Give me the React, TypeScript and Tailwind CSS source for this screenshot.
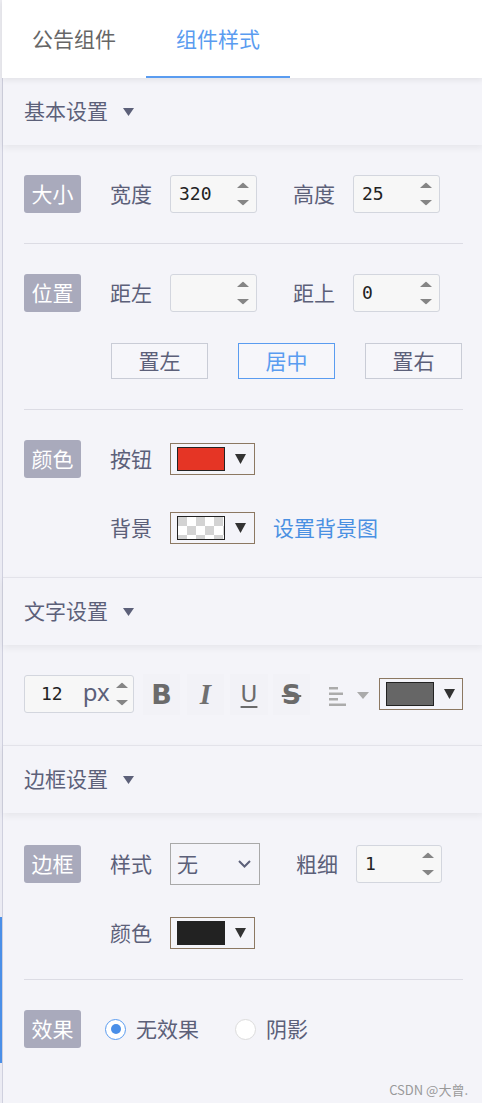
import React from "react";

const labelCls = "text-[21px] leading-none text-[#5c6079] -translate-y-px";

function Spinner() {
  return (
    <svg width="12" height="23" viewBox="0 0 12 23" className="absolute right-[7px] top-1/2 -translate-y-1/2">
      <polygon points="6,0 12,5.5 0,5.5" fill="#858585" />
      <polygon points="0,17.5 12,17.5 6,23" fill="#858585" />
    </svg>
  );
}

function Badge({ text }: { text: string }) {
  return (
    <div className="flex h-[38px] w-[57px] shrink-0 items-center justify-center rounded-[3px] bg-[#a9aabc] pb-[2px] text-[21px] leading-none text-white">
      {text}
    </div>
  );
}

function Caret({ color = "#333" }: { color?: string }) {
  return (
    <svg width="11" height="10" viewBox="0 0 11 10">
      <polygon points="0,0 11,0 5.5,10" fill={color} />
    </svg>
  );
}

function SectionHeader({ title, border }: { title: string; border?: boolean }) {
  return (
    <div
      className={
        border
          ? "relative z-10 flex h-[68px] items-center border-t border-[#e3e3ea] bg-[#f4f4f9] pl-[21px] shadow-[0_3px_7px_rgba(0,0,0,0.06)]"
          : "relative z-10 flex h-[67px] items-center bg-[#f4f4f9] pl-[21px] shadow-[0_3px_7px_rgba(0,0,0,0.06)]"
      }
    >
      <span className={labelCls}>{title}</span>
      <svg width="11" height="8" viewBox="0 0 11 8" className="ml-[15px]">
        <polygon points="0,0 11,0 5.5,8" fill="#5c6079" />
      </svg>
    </div>
  );
}

function Checker() {
  return (
    <svg width="48" height="24" className="block border border-[#222] bg-white">
      <defs>
        <pattern id="chk" width="18" height="18" patternUnits="userSpaceOnUse">
          <rect width="18" height="18" fill="#ffffff" />
          <rect x="0" y="0" width="9" height="9" fill="#d3d3d3" />
          <rect x="9" y="9" width="9" height="9" fill="#d3d3d3" />
        </pattern>
      </defs>
      <rect width="48" height="24" fill="url(#chk)" />
    </svg>
  );
}

function ColorPicker({ swatch }: { swatch: "red" | "check" | "black" }) {
  return (
    <div className="flex h-[32px] w-[85px] items-center border border-[#8c7862] pl-[6px]">
      {swatch === "red" && <div className="h-[24px] w-[48px] border border-[#222] bg-[#e53525]" />}
      {swatch === "black" && <div className="h-[24px] w-[48px] border border-[#222] bg-[#222222]" />}
      {swatch === "check" && <Checker />}
      <div className="ml-[10px] flex">
        <Caret />
      </div>
    </div>
  );
}

function NumBox({ value, wide }: { value: string; wide?: boolean }) {
  return (
    <div
      className={
        wide
          ? "relative flex h-[38px] w-[87px] items-center rounded-[3px] border border-[#d3d6de] bg-[#f7f7f7] pl-[8px]"
          : "relative flex h-[38px] w-[86px] items-center rounded-[3px] border border-[#d3d6de] bg-[#f7f7f7] pl-[8px]"
      }
    >
      <span className="font-['DejaVu_Sans_Mono',monospace] text-[18px] leading-none text-[#222]">{value}</span>
      <Spinner />
    </div>
  );
}

function Divider() {
  return <div className="h-px bg-[#dcdce4]" />;
}

export default function App() {
  return (
    <div className="relative flex h-[1103px] w-[482px] overflow-hidden bg-[#f4f4f9] font-['Noto_Sans_CJK_SC',sans-serif]">
      {/* left strip */}
      <div className="flex w-[2px] shrink-0 flex-col">
        <div className="h-[78px] bg-[#ececf1]" />
        <div className="h-[839px] bg-[#ebebf3]" />
        <div className="h-[146px] bg-[#4a8fe8]" />
        <div className="flex-1 bg-[#ebebf3]" />
      </div>

      <div className="flex flex-1 flex-col">
        {/* tabs */}
        <div className="relative z-20 flex h-[78px] bg-white shadow-[0_2px_6px_rgba(0,0,0,0.08)]">
          <div className="flex w-[144px] items-center justify-center pb-[1px] text-[21px] leading-none text-[#666]">
            公告组件
          </div>
          <div className="relative flex w-[144px] items-center justify-center pb-[1px] text-[21px] leading-none text-[#5a9cf0]">
            组件样式
            <div className="absolute bottom-0 left-0 h-[2px] w-full bg-[#5a9cf0]" />
          </div>
        </div>

        <div className="flex flex-1 flex-col border-l border-[#cfd0de]">
          <SectionHeader title="基本设置" />

          {/* basic body */}
          <div className="pl-[21px] pr-[20px] pt-[30px] pb-[33px]">
            <div className="flex h-[38px] items-center">
              <Badge text="大小" />
              <span className={"ml-[29px] w-[60px] " + labelCls}>宽度</span>
              <NumBox value="320" wide />
              <span className={"ml-[36px] w-[60px] " + labelCls}>高度</span>
              <NumBox value="25" wide />
            </div>
            <div className="mt-[30px]">
              <Divider />
            </div>
            <div className="mt-[30px] flex h-[38px] items-center">
              <Badge text="位置" />
              <span className={"ml-[29px] w-[60px] " + labelCls}>距左</span>
              <NumBox value="" wide />
              <span className={"ml-[36px] w-[60px] " + labelCls}>距上</span>
              <NumBox value="0" wide />
            </div>
            <div className="mt-[31px] flex gap-[30px] pl-[87px]">
              <div className="flex h-[36px] w-[97px] items-center justify-center border border-[#c9ccd6] bg-[#f6f6fa] pb-[2px] text-[21px] leading-none text-[#5c6079]">
                置左
              </div>
              <div className="flex h-[36px] w-[97px] items-center justify-center border border-[#5a9cf0] bg-[#f6f6fa] pb-[2px] text-[21px] leading-none text-[#5a9cf0]">
                居中
              </div>
              <div className="flex h-[36px] w-[97px] items-center justify-center border border-[#c9ccd6] bg-[#f6f6fa] pb-[2px] text-[21px] leading-none text-[#5c6079]">
                置右
              </div>
            </div>
            <div className="mt-[30px]">
              <Divider />
            </div>
            <div className="mt-[30px] flex h-[38px] items-center">
              <Badge text="颜色" />
              <span className={"ml-[29px] w-[60px] " + labelCls}>按钮</span>
              <ColorPicker swatch="red" />
            </div>
            <div className="mt-[34px] flex h-[32px] items-center pl-[86px]">
              <span className={"w-[60px] " + labelCls}>背景</span>
              <ColorPicker swatch="check" />
              <span className="ml-[18px] -translate-y-px text-[21px] leading-none text-[#4a90e2]">设置背景图</span>
            </div>
          </div>

          <SectionHeader title="文字设置" border />

          {/* text body */}
          <div className="pl-[21px] pr-[20px] pt-[30px] pb-[32px]">
            <div className="flex h-[38px] items-center">
              <div className="relative flex h-[38px] w-[110px] items-center rounded-[3px] border border-[#d3d6de] bg-[#f7f7f7]">
                <span className="ml-[16px] font-['DejaVu_Sans_Mono',monospace] text-[18px] leading-none text-[#222]">12</span>
                <span className="ml-[20px] -translate-y-[2px] font-['Noto_Sans',sans-serif] text-[24px] leading-none text-[#5c6079]">px</span>
                <svg width="12" height="23" viewBox="0 0 12 23" className="absolute right-[5px] top-1/2 -translate-y-1/2">
                  <polygon points="6,0 12,5.5 0,5.5" fill="#858585" />
                  <polygon points="0,17.5 12,17.5 6,23" fill="#858585" />
                </svg>
              </div>
              <div className="ml-[9px] flex h-[41px] w-[37px] items-center justify-center bg-[#f2f2f7] font-['DejaVu_Sans',sans-serif] text-[27px] font-bold leading-none text-[#6b6b6b]">
                B
              </div>
              <div className="ml-[7px] flex h-[41px] w-[37px] items-center justify-center bg-[#f2f2f7] font-['Liberation_Serif',serif] text-[29px] font-bold italic leading-none text-[#707070]">
                I
              </div>
              <div className="ml-[6px] flex h-[41px] w-[38px] items-center justify-center bg-[#f2f2f7] font-['DejaVu_Sans',sans-serif] text-[23px] leading-none text-[#6b6b6b] underline decoration-2 underline-offset-[4px]">
                U
              </div>
              <div className="ml-[5px] flex h-[41px] w-[37px] items-center justify-center bg-[#f2f2f7] font-['DejaVu_Sans',sans-serif] text-[27px] font-bold leading-none text-[#6b6b6b] line-through decoration-2">
                S
              </div>
              <svg width="18" height="20" viewBox="0 0 18 20" className="ml-[19px] mt-[6px]">
                <rect x="0" y="0" width="9" height="2.5" fill="#ababab" />
                <rect x="0" y="5.5" width="14" height="2.5" fill="#ababab" />
                <rect x="0" y="11" width="9" height="2.5" fill="#ababab" />
                <rect x="0" y="16.5" width="17" height="2.5" fill="#ababab" />
              </svg>
              <svg width="12" height="7" viewBox="0 0 12 7" className="ml-[10px] mt-[2px]">
                <polygon points="0,0 12,0 6,7" fill="#ababab" />
              </svg>
              <div className="ml-[10px] flex h-[32px] w-[84px] items-center border border-[#8c7862] pl-[6px]">
                <div className="h-[24px] w-[48px] border border-[#222] bg-[#666666]" />
                <div className="ml-[10px] flex">
                  <Caret />
                </div>
              </div>
            </div>
          </div>

          <SectionHeader title="边框设置" border />

          {/* border body */}
          <div className="pl-[21px] pr-[20px] pt-[30px]">
            <div className="flex h-[42px] items-center">
              <Badge text="边框" />
              <span className={"ml-[29px] w-[60px] " + labelCls}>样式</span>
              <div className="flex h-[42px] w-[90px] items-center justify-between border border-[#a9a9a9] pl-[6px] pr-[8px]">
                <span className={labelCls}>无</span>
                <svg width="13" height="8" viewBox="0 0 13 8">
                  <polyline points="1,1 6.5,6.5 12,1" fill="none" stroke="#5c6079" strokeWidth="2" />
                </svg>
              </div>
              <span className={"ml-[36px] w-[60px] " + labelCls}>粗细</span>
              <NumBox value="1" />
            </div>
            <div className="mt-[32px] flex h-[32px] items-center pl-[86px]">
              <span className={"w-[60px] " + labelCls}>颜色</span>
              <ColorPicker swatch="black" />
            </div>
            <div className="mt-[30px]">
              <Divider />
            </div>
            <div className="mt-[30px] flex h-[38px] items-center">
              <Badge text="效果" />
              <div className="ml-[24px] flex w-[130px] items-center">
                <div className="flex h-[21px] w-[21px] items-center justify-center rounded-full border border-[#5a9cf0] bg-white">
                  <div className="h-[10px] w-[10px] rounded-full bg-[#4a8fe8]" />
                </div>
                <span className={"ml-[10px] " + labelCls}>无效果</span>
              </div>
              <div className="flex items-center">
                <div className="h-[21px] w-[21px] rounded-full border border-[#dcdcdc] bg-white" />
                <span className={"ml-[10px] " + labelCls}>阴影</span>
              </div>
            </div>
          </div>
        </div>
      </div>

      <div className="absolute bottom-[7px] right-[14px] text-[13px] leading-none text-[#999]">CSDN @大曾.</div>
    </div>
  );
}
